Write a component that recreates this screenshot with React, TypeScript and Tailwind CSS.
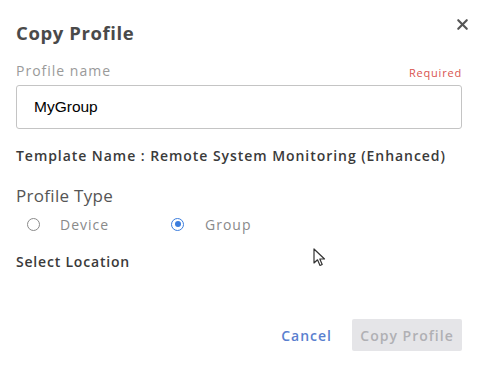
import { X } from "lucide-react"

export default function App() {
  return (
    <div className="relative w-[484px] h-[372px] bg-white font-['Open_Sans',sans-serif] overflow-hidden">
      <div className="px-4 pt-[17px]">
        <div className="flex items-start justify-between">
          <h1 className="text-[18.5px] font-bold tracking-[0.6px] text-[#4a4a4a] leading-[26px] mt-[3px]">Copy Profile</h1>
          <X className="w-[17px] h-[17px] text-[#555] mt-[-1px] mr-[-3px]" strokeWidth={3} />
        </div>

        <div className="mt-[15px] flex items-end justify-between pr-[6px]">
          <span className="text-[14px] tracking-[1px] text-[#9a9a9a] leading-[20px]">Profile name</span>
          <span className="text-[11px] tracking-[0.8px] text-[#d9534f] leading-[14px] mb-[1px]">Required</span>
        </div>
        <div className="mt-[4px] h-[44px] w-[446px] border border-[#c4c4c4] rounded-[3px] flex items-center px-[17px]">
          <span className="font-['Liberation_Sans',Arial,sans-serif] text-[15.5px] text-black">MyGroup</span>
        </div>

        <div className="mt-[18px] text-[14px] tracking-[0.95px] font-semibold text-[#3a3a3a] leading-[18px]">
          Template Name : Remote System Monitoring (Enhanced)
        </div>

        <div className="mt-[20px] text-[17px] tracking-[0.3px] text-[#555] leading-[22px]">Profile Type</div>
        <div className="mt-[8px] flex items-center h-[18px]">
          <label className="flex items-center w-[144px] pl-[11px]">
            <span className="w-[13px] h-[13px] rounded-full border-[1.5px] border-[#8a8a8a]" />
            <span className="ml-[20px] text-[14px] tracking-[1px] text-[#8a8a8a]">Device</span>
          </label>
          <label className="flex items-center pl-[11px]">
            <span className="w-[13px] h-[13px] rounded-full border-[1.5px] border-[#3b7ddd] flex items-center justify-center">
              <span className="w-[6px] h-[6px] rounded-full bg-[#3b7ddd]" />
            </span>
            <span className="ml-[21px] text-[14px] tracking-[1px] text-[#8a8a8a]">Group</span>
          </label>
        </div>

        <div className="mt-[19px] text-[14px] tracking-[0.8px] font-semibold text-[#3a3a3a] leading-[20px]">Select Location</div>

        <div className="mt-[47px] flex items-center justify-end gap-[20px] pr-[6px]">
          <button className="text-[14px] tracking-[1px] font-semibold text-[#5a7fcf]">Cancel</button>
          <button className="w-[110px] h-[32px] rounded-[2px] bg-[#e5e5e8] text-[14px] tracking-[1px] font-semibold text-[#b0b0b4]">
            Copy Profile
          </button>
        </div>
      </div>

      <svg className="absolute left-[313px] top-[248px]" width="14" height="20" viewBox="0 0 14 20">
        <path d="M1 1 L1 15 L4.5 11.8 L7 17.5 L9.2 16.5 L6.8 11 L11.5 11 Z" fill="white" stroke="#333" strokeWidth="1.2" strokeLinejoin="round" />
      </svg>
    </div>
  )
}
